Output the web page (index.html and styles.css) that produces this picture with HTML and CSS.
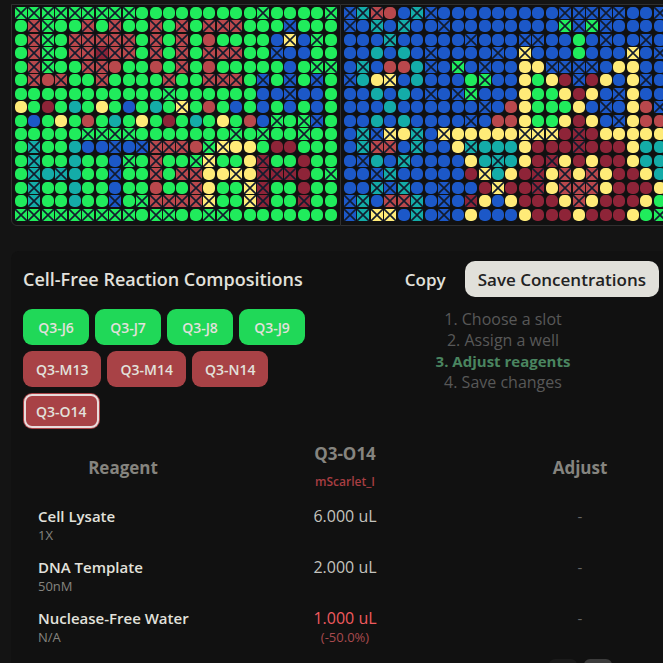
FILE: index.html
```html
<!DOCTYPE html>
<html lang="en">
<head>
<meta charset="utf-8">
<title>Cell-Free Reaction Compositions</title>
<link rel="stylesheet" href="styles.css">
</head>
<body>
<main class="page">
  <section class="plates" aria-label="Plate map">
    <div class="plate" id="plate-left"></div>
    <div class="plate" id="plate-right"></div>
  </section>

  <section class="card">
    <header class="card-header">
      <h1 class="title">Cell-Free Reaction Compositions</h1>
      <div class="actions">
        <button class="btn" type="button">Copy</button>
        <button class="btn btn-primary" type="button">Save Concentrations</button>
      </div>
    </header>

    <div class="setup">
      <div class="slots">
        <button class="slot green" type="button">Q3-J6</button>
        <button class="slot green" type="button">Q3-J7</button>
        <button class="slot green" type="button">Q3-J8</button>
        <button class="slot green" type="button">Q3-J9</button>
        <button class="slot red" type="button">Q3-M13</button>
        <button class="slot red" type="button">Q3-M14</button>
        <button class="slot red" type="button">Q3-N14</button>
        <button class="slot red selected" type="button">Q3-O14</button>
      </div>
      <ol class="steps">
        <li>Choose a slot</li>
        <li>Assign a well</li>
        <li class="current">Adjust reagents</li>
        <li>Save changes</li>
      </ol>
    </div>

    <table class="reagents">
      <thead>
        <tr>
          <th class="col-name" scope="col">Reagent</th>
          <th class="col-volume" scope="col">Q3-O14<span class="protein">mScarlet_I</span></th>
          <th class="col-adjust" scope="col">Adjust</th>
        </tr>
      </thead>
      <tbody>
        <tr>
          <td><span class="name">Cell Lysate</span><span class="stock">1X</span></td>
          <td class="col-volume">6.000 uL</td>
          <td class="col-adjust">-</td>
        </tr>
        <tr>
          <td><span class="name">DNA Template</span><span class="stock">50nM</span></td>
          <td class="col-volume">2.000 uL</td>
          <td class="col-adjust">-</td>
        </tr>
        <tr>
          <td><span class="name">Nuclease-Free Water</span><span class="stock">N/A</span></td>
          <td class="col-volume changed">1.000 uL<span class="delta">(-50.0%)</span></td>
          <td class="col-adjust">-</td>
        </tr>
        <tr>
          <td></td>
          <td></td>
          <td class="col-adjust">
            <div class="steppers">
              <button class="stepper" type="button" aria-label="Decrease"></button>
              <button class="stepper raised" type="button" aria-label="Increase"></button>
            </div>
          </td>
        </tr>
      </tbody>
    </table>
  </section>
</main>
<script src="plates.js"></script>
</body>
</html>
```
FILE: styles.css
```css
* {
  box-sizing: border-box;
}

body {
  margin: 0;
  height: 100vh;
  overflow: hidden;
  background: #141414;
  color: #e2e1dc;
  font-family: "Open Sans", "Noto Sans", sans-serif;
  font-size: 16px;
}

button {
  border: 0;
  font: inherit;
  color: inherit;
}

.page {
  padding: 4px 0 0 11px;
}

.plates {
  display: flex;
  overflow: hidden;
  margin-bottom: 25px;
}

.plate {
  flex: none;
  display: grid;
  grid-template-columns: repeat(24, 1fr);
  grid-template-rows: repeat(16, 1fr);
  width: 330px;
  height: 222px;
  padding: 2px 2px 3px 3px;
  border: 1px solid #303030;
  background: #111;
}

.plate:first-child {
  border-radius: 0 0 0 6px;
}

.plate + .plate {
  padding-right: 3px;
  border-left: 0;
}

.well {
  width: 12px;
  height: 12px;
  border-radius: 5px;
}

.well.crossed {
  border-radius: 1px;
}

.well svg {
  display: block;
  width: 12px;
  height: 12px;
  stroke: #131c2e;
  stroke-width: 1.6;
}

.well-g { background: #20ec5c; }
.well-r { background: #b9484c; }
.well-m { background: #8e2438; }
.well-t { background: #14aca8; }
.well-b { background: #1c58c8; }
.well-y { background: #ffeb78; }

.card {
  padding: 10px 4px 0 12px;
  border-radius: 8px 0 0 0;
  background: #111;
}

.card-header {
  display: flex;
  align-items: center;
  justify-content: space-between;
  height: 36px;
  margin-bottom: 12px;
}

.title {
  margin: 0;
  font-size: 18px;
  font-weight: 600;
  white-space: nowrap;
}

.actions {
  display: flex;
  gap: 6px;
}

.btn {
  height: 36px;
  padding: 0 13px;
  border-radius: 10px;
  background: transparent;
  font-size: 17px;
  font-weight: 600;
  white-space: nowrap;
}

.btn-primary {
  background: #e1e0da;
  color: #222;
}

.setup {
  display: flex;
  justify-content: space-between;
}

.slots {
  display: flex;
  flex-wrap: wrap;
  gap: 6px;
  width: 300px;
}

.slot {
  height: 36px;
  min-width: 66px;
  padding: 0 13px;
  border-radius: 9px;
  font-size: 14px;
  font-weight: 600;
}

.slot.green { background: #20d858; }
.slot.red { background: #a84246; }

.slot.selected {
  outline: 2px solid #e8dcdc;
  outline-offset: -3px;
}

.steps {
  flex: 1;
  margin: 0;
  padding: 0 0 0 24px;
  list-style-position: inside;
  color: #585858;
  font-size: 16px;
  line-height: 21px;
  text-align: center;
}

.steps .current {
  color: #4a8560;
  font-size: 15px;
  font-weight: 700;
}

.reagents {
  width: 100%;
  margin-top: 6px;
  border-collapse: collapse;
  table-layout: fixed;
}

th {
  height: 66px;
  padding: 0;
  color: #85847f;
  font-size: 17px;
  font-weight: 700;
  line-height: 24px;
}

td {
  height: 51px;
  padding: 5px 0 0 15px;
  font-size: 15px;
  line-height: 21px;
  vertical-align: top;
  white-space: nowrap;
}

.col-name {
  width: 200px;
}

.col-volume {
  width: 244px;
  padding-left: 0;
  color: #c4c3be;
  font-size: 16px;
  text-align: center;
}

th.col-volume {
  color: #85847f;
  font-size: 17px;
}

.col-adjust {
  padding-left: 34px;
  color: #666;
  text-align: center;
}

th.col-adjust {
  color: #85847f;
}

.protein,
.name,
.stock,
.delta {
  display: block;
}

.protein {
  margin-top: 4px;
  color: #a83e42;
  font-size: 12px;
  font-weight: 600;
}

.name {
  font-weight: 600;
}

.stock,
.delta {
  font-size: 13px;
  line-height: 17px;
}

.stock {
  color: #85847f;
}

.col-volume.changed {
  color: #f05a5e;
}

.delta {
  color: #a84a4e;
}

.steppers {
  display: flex;
  justify-content: center;
  gap: 7px;
}

.stepper {
  width: 28px;
  height: 28px;
  border-radius: 6px;
  background: #1b1b1b;
}

.stepper.raised {
  background: #3c3c3c;
}
```
FILE: plates.js
```js
// One letter per well: its colour. A lower-case letter is a crossed-out well.
const plates = {
  "plate-left": [
    "gggggggggGGGGGGGGGgGGGGg",
    "GrgGGrGrGGrGrGrrrGGGbGGG",
    "GrgGrrrrrGrGrGRGGGGByBgG",
    "GrgGrrmrrGrGrGrrrGGbBBGG",
    "GrgGGrrRGGRGrGRGGGGGBGgg",
    "GrRrGGrGGGGrGGrrrGbGbGbG",
    "GGGGGGGGGGGgGGGGGGBBbBBG",
    "YGMGTGYGBGTGyGRGBGBGBGBG",
    "GBGYGRGTGYGMGTGYGRBgGgbG",
    "GGGGGggggGGGGGGGgGgGGgGG",
    "GtGGTBBbBbrrrRgyYYGMMGGG",
    "GtGGTGGBgGrGGgyGGYmGGMGG",
    "GtTtTGGbGGrGrrYYyYmmmMGg",
    "GtGGTGGBGGRGGrYGGymGGMGG",
    "GtGGTGGbGgrrrryGGymGGmGG",
    "gggggggggGggGGggGGGGGGGG"
  ],
  "plate-right": [
    "btrRBtbBBBBBBBBBbbbbbBBb",
    "bBtBtBBbBBBBBBBBgbgbBBBB",
    "BBBtBBBBBbBBBbbBBGBbBBbB",
    "BBTBTBbBBBBbByBBBGBBByBb",
    "BtBRRTbBgBbBBYYbbbbBYYBB",
    "bTYyBTBBBGgBBYGYMbMYBYbB",
    "BBTBTBbBbgBBBYGGYMYBbYBB",
    "BBBTBBBBBBbBRYGGGYBbBYRb",
    "BBTBTBBBBbBRRYGGYMYBbYRR",
    "BtbyYtByYYYYYyyyMmMYYYYY",
    "BtrrBtBBYtTTTYMMMmMMMYTT",
    "BbTBtBBBBYTtTYMmYMYMMYTT",
    "BBbtBBBBBMyTYMmYrYrYMMYT",
    "BBtbtBBbBBMyMMmYrrrYMMMY",
    "btBrrtBbBmYBYMMMYrYMMMYG",
    "btyyBtBbBYBBBYMMMYMMMYGg"
  ]
};

const cross = '<svg viewBox="0 0 12 12" aria-hidden="true"><path d="M0 0L12 12M12 0L0 12"/></svg>';

for (const [id, rows] of Object.entries(plates)) {
  document.getElementById(id).innerHTML = rows.join("").split("").map(code => {
    const colour = code.toLowerCase();
    const crossed = code === colour;
    return `<div class="well well-${colour}${crossed ? " crossed" : ""}">${crossed ? cross : ""}</div>`;
  }).join("");
}
```
